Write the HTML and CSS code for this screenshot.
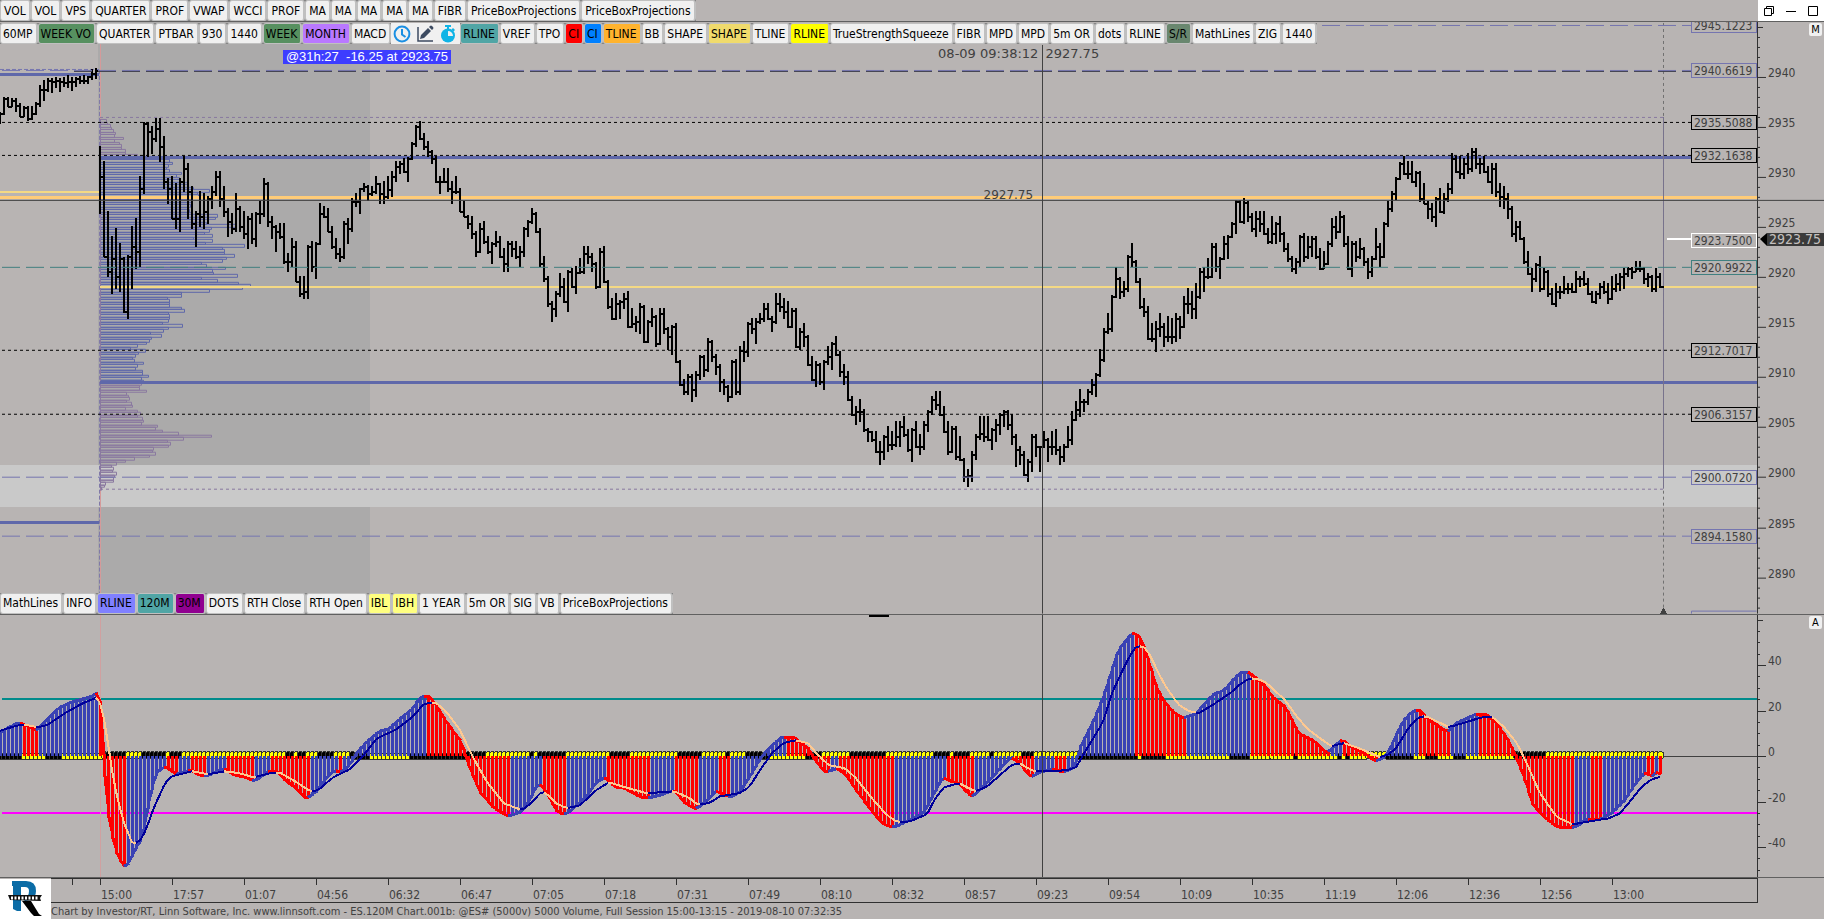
FILE: index.html
```html
<!doctype html>
<html lang="en">
<head>
  <title>ES.120M Chart</title>
  <meta charset="UTF-8">
  <meta name="viewport" content="width=device-width, initial-scale=1">
  <link rel="stylesheet" href="styles.css">
</head>
<body>
  <header class="top-bar">
    <div class="toolbar toolbar-main">
      <button type="button">VOL</button>
      <button type="button">VOL</button>
      <button type="button">VPS</button>
      <button type="button">QUARTER</button>
      <button type="button">PROF</button>
      <button type="button">VWAP</button>
      <button type="button">WCCI</button>
      <button type="button">PROF</button>
      <button type="button">MA</button>
      <button type="button">MA</button>
      <button type="button">MA</button>
      <button type="button">MA</button>
      <button type="button">MA</button>
      <button type="button">FIBR</button>
      <button type="button">PriceBoxProjections</button>
      <button type="button">PriceBoxProjections</button>
    </div>
    <div class="window-controls">
      <button type="button" aria-label="Restore">
        <svg width="10" height="10" viewBox="0 0 10 10"><path d="M2.500 2.500V.5h7v7h-2M.5 2.500h7v7h-7z"/></svg>
      </button>
      <button type="button" aria-label="Minimize">
        <svg width="10" height="10" viewBox="0 0 10 10"><path d="M0 5.500h10"/></svg>
      </button>
      <button type="button" aria-label="Maximize">
        <svg width="10" height="10" viewBox="0 0 10 10"><path d="M.5.5h9v9h-9z"/></svg>
      </button>
    </div>
  </header>

  <main class="panes">
    <section class="pane price-pane">
      <div class="plot">
        <svg class="layer" id="priceSvg" viewBox="0 22 1757 592" preserveAspectRatio="none"></svg>
        <div id="levels"></div>
        <div class="toolbar toolbar-top">
          <button type="button">60MP</button>
          <button type="button" class="green">WEEK VO</button>
          <button type="button">QUARTER</button>
          <button type="button">PTBAR</button>
          <button type="button">930</button>
          <button type="button">1440</button>
          <button type="button" class="green">WEEK</button>
          <button type="button" class="violet">MONTH</button>
          <button type="button">MACD</button>
          <button type="button" class="icon-btn" aria-label="Clock">
            <svg width="18" height="18" viewBox="0 0 18 18" fill="none" stroke="#1a8fe3" stroke-width="2"><circle cx="9" cy="9" r="7.400"/><path d="M9 4v5.500l3.500 2.500"/></svg>
          </button>
          <button type="button" class="icon-btn" aria-label="Draw">
            <svg width="18" height="18" viewBox="0 0 18 18"><path d="M2 2v14h15" fill="none" stroke="#3c4a60" stroke-width="1.500"/><path d="M4 14l1-4 7-7 3 3-7 7zM13 2l1-1q1-1 2 0l1 1q1 1 0 2l-1 1z" fill="#3c4a60"/></svg>
          </button>
          <button type="button" class="icon-btn" aria-label="Timer">
            <svg width="18" height="18" viewBox="0 0 18 18"><path d="M6 0h6v2H10v2H8V2H6zM14 3l2 2-1.500 1.500-2-2z" fill="#10b4e6"/><circle cx="9" cy="10.500" r="7" fill="#10b4e6"/><path d="M9 6v5h5a5 5 0 0 0-5-5z" fill="#f0f0f0"/></svg>
          </button>
          <button type="button" class="teal">RLINE</button>
          <button type="button">VREF</button>
          <button type="button">TPO</button>
          <button type="button" class="red">CI</button>
          <button type="button" class="blue">CI</button>
          <button type="button" class="orange">TLINE</button>
          <button type="button">BB</button>
          <button type="button">SHAPE</button>
          <button type="button" class="sand">SHAPE</button>
          <button type="button">TLINE</button>
          <button type="button" class="yellow">RLINE</button>
          <button type="button">TrueStrengthSqueeze</button>
          <button type="button">FIBR</button>
          <button type="button">MPD</button>
          <button type="button">MPD</button>
          <button type="button">5m OR</button>
          <button type="button">dots</button>
          <button type="button">RLINE</button>
          <button type="button" class="moss">S/R</button>
          <button type="button">MathLines</button>
          <button type="button">ZIG</button>
          <button type="button">1440</button>
        </div>
        <div class="trade-badge">@31h:27&nbsp; -16.25 at 2923.75</div>
        <div class="cursor-time">08-09 09:38:12</div>
        <div class="cursor-value">2927.75</div>
        <div class="cursor-price">2927.75</div>
        <div class="toolbar toolbar-bottom">
          <button type="button">MathLines</button>
          <button type="button">INFO</button>
          <button type="button" class="indigo">RLINE</button>
          <button type="button" class="teal">120M</button>
          <button type="button" class="purple">30M</button>
          <button type="button">DOTS</button>
          <button type="button">RTH Close</button>
          <button type="button">RTH Open</button>
          <button type="button" class="lemon">IBL</button>
          <button type="button" class="lemon">IBH</button>
          <button type="button">1 YEAR</button>
          <button type="button">5m OR</button>
          <button type="button">SIG</button>
          <button type="button">VB</button>
          <button type="button">PriceBoxProjections</button>
        </div>
      </div>
      <div class="axis" id="priceAxis">
        <svg class="layer" id="priceTicks" viewBox="0 22 67 592" preserveAspectRatio="none"></svg>
        <button type="button" class="scale-btn">M</button>
        <div class="last-price">2923.75</div>
      </div>
    </section>

    <section class="pane tsi-pane">
      <div class="plot">
        <svg class="layer" id="tsiSvg" viewBox="0 615 1757 262" preserveAspectRatio="none"></svg>
      </div>
      <div class="axis" id="tsiAxis">
        <svg class="layer" id="tsiTicks" viewBox="0 615 67 262" preserveAspectRatio="none"></svg>
        <button type="button" class="scale-btn">A</button>
      </div>
    </section>
  </main>

  <footer class="bottom-bar">
    <svg class="logo" width="51" height="41" viewBox="0 0 51 41">
      <path d="M0 1h51v40H0z" fill="#fff"/>
      <path d="M12 3h14q10 0 10 10 0 7-6 9l-5 1-4-4h3q5 0 5-6 0-4-4-4h-4v24h-4l-4-2V8h-1z" fill="#0b6ca6"/>
      <path d="M22 23h9l8 13 3 2h-8l-3-3z" fill="#000"/>
      <path d="M8 17h34l-2 3 1 3-31-1z" fill="#111"/>
      <path d="M11 20h28" stroke="#fff" stroke-width="3" stroke-dasharray="2 1.500"/>
    </svg>
    <div class="bottom-info">
      <div class="time-axis" id="timeAxis"></div>
      <div class="credits">Chart by Investor/RT, Linn Software, Inc. www.linnsoft.com - ES.120M Chart.001b: @ES# (5000v) 5000 Volume, Full Session 15:00-13:15 - 2019-08-10 07:32:35</div>
    </div>
  </footer>
  <script src="chart.js"></script>
</body>
</html>
```
FILE: styles.css
```css
* {
  box-sizing: border-box;
}
body {
  margin: 0;
  height: 100vh;
  display: flex;
  flex-direction: column;
  overflow: hidden;
  background: #b8b4b3;
  color: #404040;
  font-family: 'DejaVu Sans Condensed', 'Noto Sans', sans-serif;
  font-size: 12px;
  line-height: 16px;
}
button {
  font: inherit;
  margin: 0;
  padding: 0;
  border: 0;
  cursor: pointer;
}

/* toolbars */
.top-bar {
  display: flex;
  justify-content: space-between;
  height: 22px;
  border-bottom: 1px solid #606060;
}
.toolbar {
  display: flex;
  width: max-content;
  height: 21px;
  background: #808080;
}
.toolbar button {
  padding: 0 3px 0 2px;
  border: 1px solid #c0c0c0;
  border-right-width: 2px;
  border-radius: 3px;
  background: #f0f0f0;
  color: #000;
  white-space: nowrap;
}
.toolbar-main button {
  padding: 0 3px;
}
.toolbar-top {
  position: absolute;
  top: 1px;
  left: 0;
}
.toolbar-bottom {
  position: absolute;
  bottom: 0;
  left: 0;
}
.toolbar .icon-btn {
  display: flex;
  align-items: center;
  border-color: #f0f0f0;
  border-radius: 0;
  padding: 0 1px;
}
.toolbar .green { background: #579060; }
.toolbar .violet { background: #b978ff; }
.toolbar .teal { background: #50a5a5; }
.toolbar .red { background: #ff0000; }
.toolbar .blue { background: #0080ff; }
.toolbar .orange { background: #ffb32e; }
.toolbar .sand { background: #f0db6c; }
.toolbar .yellow { background: #ffff00; }
.toolbar .moss { background: #69876f; }
.toolbar .indigo { background: #8080ff; }
.toolbar .purple { background: #900090; }
.toolbar .lemon { background: #ffff80; }

.window-controls {
  display: flex;
  width: 66px;
  background: #fff;
}
.window-controls button {
  flex: 1;
  display: flex;
  align-items: center;
  justify-content: center;
  background: #fff;
}
.window-controls svg {
  fill: none;
  stroke: #000;
}

/* panes */
.panes {
  flex: 1;
  display: flex;
  flex-direction: column;
  min-height: 0;
}
.pane {
  display: grid;
  grid-template-columns: 1fr 67px;
  border-bottom: 1px solid #606060;
  min-height: 0;
}
.price-pane {
  flex: 593 0 0;
}
.tsi-pane {
  flex: 263 0 0;
}
.plot,
.axis {
  position: relative;
  overflow: hidden;
}
.layer {
  position: absolute;
  width: 100%;
  height: 100%;
  shape-rendering: crispEdges;
}
.axis-label {
  position: absolute;
  left: 11px;
  transform: translateY(-12px);
}
.scale-btn {
  position: absolute;
  top: 1px;
  right: 2px;
  width: 13px;
  height: 13px;
  line-height: 13px;
  font-size: 11px;
  background: #f0f0f0;
  color: #000;
  border-radius: 2px;
}
.last-price {
  position: absolute;
  top: 35.600%;
  left: 10px;
  right: 0;
  height: 13px;
  padding-left: 2px;
  background: #3a3a3a;
  color: #c4c0bf;
  font-size: 14px;
  line-height: 13px;
}
.last-price::before {
  content: '';
  position: absolute;
  right: 100%;
  top: 0;
  border: solid transparent;
  border-width: 6px 7px 7px 0;
  border-right-color: #000;
}

/* text on the price plot */
.level {
  position: absolute;
  right: 0;
  width: 66px;
  height: 15px;
  line-height: 14px;
  padding-left: 2px;
  border: 1px solid #000;
  transform: translateY(-7px);
}
.level.slate { border-color: #7575b0; }
.level.white { border-color: #fff; }
.level.sea { border-color: #408080; }
.trade-badge {
  position: absolute;
  top: 28px;
  left: 16.100%;
  height: 14px;
  padding: 0 3px;
  background: #3d3dff;
  color: #fff;
  font-family: 'Liberation Sans', Arial, sans-serif;
  font-size: 13px;
  line-height: 14px;
  white-space: nowrap;
}
.cursor-time,
.cursor-value,
.cursor-price {
  position: absolute;
  top: 24px;
  font-family: 'DejaVu Sans', sans-serif;
  font-size: 13px;
}
.cursor-time {
  right: 40.900%;
}
.cursor-value {
  left: 59.500%;
}
.cursor-price {
  top: 27.900%;
  right: 41.200%;
  font-size: 12px;
}

/* time axis and credits */
.bottom-bar {
  display: flex;
  height: 41px;
}
.logo {
  flex: none;
}
.bottom-info {
  flex: 1;
}
.time-axis {
  position: relative;
  height: 25px;
  margin-right: 66px;
  border: solid #303030;
  border-width: 1px 1px 1px 0;
}
.time-mark {
  position: absolute;
  top: 0;
  height: 6px;
  border-left: 1px solid #303030;
}
.time-mark span {
  position: absolute;
  top: 8px;
  left: 0;
}
.credits {
  padding-top: 1px;
  font-size: 11px;
  line-height: 15px;
  white-space: nowrap;
}
```
FILE: chart.js
```js
const priceSvg = document.getElementById('priceSvg');
const tsiSvg = document.getElementById('tsiSvg');

const SLATE = '#7575b0';
const BLUE = '#5f68aa';
const PURPLE = '#8a78a0';

// high low close, one bar every 4 units
const bars = `
113 124 114,98 115 99,98 107 107,99 107 101,99 112 106,104 117 117,107 117 108,107 121 119,107 120 114,103 115 104,
86 107 90,81 101 90,79 92 81,79 93 82,78 88 81,79 92 82,78 87 83,76 88 82,78 91 82,78 87 79,77 84 81,76 84 81,77 84 77,70 80 74,69 79 71,
147 214 177,162 257 257,212 277 272,237 294 259,229 289 277,244 292 259,258 313 312,256 319 257,227 289 247,219 269 252,
177 267 189,123 194 124,123 157 132,127 154 139,119 142 129,119 162 147,137 189 182,179 204 189,177 219 219,184 229 219,
179 232 182,157 192 169,164 219 192,187 229 224,212 247 214,192 227 217,194 229 212,197 224 199,187 209 192,172 196 177,
172 207 199,187 217 212,209 237 222,214 234 229,194 232 209,207 232 227,212 239 234,217 249 219,214 244 239,213 247 214,
202 224 214,179 217 184,183 227 222,217 239 227,226 252 232,224 239 237,224 264 262,254 272 262,239 267 247,242 282 282,
277 297 294,277 299 292,246 299 247,242 272 267,243 279 244,204 245 214,207 218 217,209 232 232,227 249 247,239 259 254,
249 262 257,222 259 224,219 244 229,199 232 202,194 207 202,189 214 189,184 192 187,186 201 194,187 196 192,177 194 184,
184 204 194,182 204 197,177 199 190,172 197 177,162 182 167,162 174 164,159 173 172,158 182 159,143 160 144,126 147 127,
122 140 139,134 150 147,142 157 152,151 164 159,157 183 182,177 194 182,169 183 182,169 192 189,182 204 192,177 194 192,
189 212 212,202 217 217,216 229 224,217 239 234,232 257 252,224 253 229,
222 244 242,237 254 252,243 264 244,232 247 242,237 258 257,249 272 264,242 272 244,242 257 249,242 259 257,247 267 252,
228 257 229,221 237 222,209 224 214,213 233 232,229 267 264,257 282 279,277 307 304,302 322 309,292 317 294,274 297 287,
279 303 302,271 312 272,269 288 287,267 294 273,259 274 272,247 274 254,247 264 257,254 272 264,263 289 287,249 288 252,
247 283 282,281 309 307,299 320 319,294 320 304,301 319 302,294 309 299,292 328 327,309 328 324,317 332 322,304 334 307,
306 343 342,321 343 322,309 327 317,316 347 344,309 345 314,309 334 329,328 350 337,326 355 327,324 363 362,361 386 385,
380 395 392,375 395 377,375 402 390,372 397 375,356 380 357,356 377 370,339 372 342,341 362 357,355 375 367,365 392 382,
380 395 387,386 402 397,361 398 362,360 395 392,347 395 351,342 362 352,323 357 324,319 334 329,319 344 322,314 324 319,
304 322 309,304 320 319,317 332 322,294 324 304,294 312 307,299 319 312,302 328 327,309 328 311,309 348 347,329 350 332,
324 347 337,336 366 365,357 381 380,362 387 365,364 385 382,361 390 362,347 365 357,343 370 344,337 356 355,352 377 372,
365 385 377,372 401 400,397 416 415,407 425 412,400 422 412,410 432 430,429 442 432,432 442 440,432 453 452,442 465 452,
436 460 437,427 452 445,432 450 445,422 447 437,422 447 427,417 437 435,430 452 450,429 462 430,422 448 447,435 455 447,
422 450 425,411 432 412,397 415 400,392 410 405,392 416 415,407 433 432,422 455 452,427 453 429,427 460 457,437 461 460,
459 482 477,470 487 476,452 482 455,435 460 437,417 440 434,417 442 437,417 441 440,429 450 430,420 442 425,414 435 415,
411 427 412,411 430 425,415 445 437,435 467 450,447 465 455,452 476 475,460 482 462,435 472 437,435 457 447,447 472 447,
432 448 440,439 462 447,432 455 447,430 455 450,447 465 457,445 462 447,427 448 440,412 445 420,402 421 410,390 417 402,
400 412 402,390 405 392,380 395 385,374 397 375,350 377 360,329 362 332,314 334 329,296 332 297,268 298 279,278 299 292,
282 297 289,256 292 257,244 267 262,261 283 282,279 309 307,299 317 312,307 340 339,324 342 339,322 352 329,314 337 327,
324 347 337,317 342 337,319 344 337,314 342 319,317 339 327,297 328 304,289 314 304,292 319 309,284 319 297,269 299 272,
268 292 277,259 279 277,244 278 247,244 272 267,258 279 259,237 260 244,236 259 237,223 238 224,201 234 202,201 223 222,
199 224 203,202 222 217,214 232 229,212 237 219,212 232 224,212 235 234,229 244 242,217 244 234,223 244 224,217 242 234,
233 252 249,244 262 259,257 272 269,259 274 262,236 267 237,234 262 257,237 259 247,237 257 239,237 259 257,249 270 269,
252 269 264,242 265 244,219 247 227,217 239 232,212 233 217,216 247 244,237 270 269,242 277 244,242 262 257,239 259 249,
248 266 262,259 279 272,257 277 259,229 260 247,244 267 257,223 258 224,202 227 209,192 212 194,178 200 179,163 180 164,
157 175 174,162 179 174,162 183 182,172 187 173,172 202 199,184 204 204,202 219 209,204 222 217,198 227 199,189 213 212,
194 214 199,184 202 189,154 194 159,157 173 172,157 179 174,159 179 164,154 174 169,149 172 152,149 169 164,159 174 164,
157 173 172,167 183 182,164 194 169,164 197 192,184 207 197,187 209 199,194 219 209,207 237 234,222 242 227,222 240 239,
238 264 262,252 275 274,269 292 279,264 282 265,257 292 289,269 290 272,271 297 294,289 305 304,284 307 292,287 299 292,
277 294 289,284 294 289,284 293 292,272 293 279,277 287 279,272 286 284,279 295 294,292 303 302,292 304 294,284 299 287,
282 294 292,284 304 299,277 300 289,275 292 284,274 291 277,269 289 274,268 277 269,268 279 272,262 272 269,262 272 269,
268 284 279,274 287 277,276 292 289,269 292 277,274 288 287`;

// volume at price, 0.25 point rows
const profile = [
  6, 7, 10, 11, 13, 15, 14, 23, 14, 19, 21, 21, 25, 25, 37, 69,
  69, 72, 68, 66, 69, 81, 76, 79, 79, 87, 83, 93, 109, 97, 98, 87, 92, 92, 90, 87, 89, 92, 117, 115,
  103, 106, 135, 111, 109, 104, 112, 93, 112, 105, 144, 122, 124, 124, 134, 126, 122, 101, 106, 125,
  112, 113, 137, 101, 117, 138, 150, 142, 109, 81, 81, 67, 69, 69, 69, 81, 84, 68, 69, 69, 68, 62, 82,
  68, 63, 50, 61, 51, 49, 46, 37, 30, 45, 38, 35, 32, 34, 43, 37, 35, 42, 42, 48, 41, 43,
  41, 39, 39, 46, 26, 28, 29, 26, 31, 32, 25, 37, 40, 37, 42, 43, 41, 57, 55, 62, 78, 111, 83, 67, 70,
  68, 53, 52, 55, 49, 34, 25, 16, 11, 13, 12, 16, 14, 13, 13, 5, 4, 1
];

// x y points of the strength line and of its signal
const strength = `0 732,18 722,27 726,36 730,47 719,58 708,71 702,92 696,98 691,100 703,104 767,107 807,112 835,117 855,124 866,126 867,
134 850,142 837,145 820,150 793,156 773,162 767,166 767,176 774,184 772,190 769,199 775,206 776,223 768,234 775,245 777,254 781,
268 771,277 771,286 781,295 787,306 799,317 790,324 780,333 770,342 772,350 763,357 752,366 742,379 731,388 729,404 715,411 710,
421 696,428 696,435 704,446 722,461 742,469 767,480 792,493 807,507 816,520 812,529 800,538 782,547 793,557 812,566 814,576 805,
585 797,596 782,605 777,615 787,625 788,638 796,647 798,656 796,674 790,685 803,695 809,703 803,716 791,730 797,739 792,745 783,
753 770,762 755,770 747,781 737,795 737,799 742,807 747,814 759,825 772,837 768,846 775,856 790,871 810,883 824,894 827,910 819,
923 813,931 798,942 777,950 781,959 783,971 797,986 783,1000 768,1010 757,1019 762,1030 777,1042 771,1053 769,1063 772,1074 767,
1080 747,1095 717,1103 697,1118 650,1133 632,1140 638,1147 657,1156 687,1164 702,1174 713,1182 718,1195 714,1206 702,1214 693,
1223 691,1239 673,1248 672,1254 677,1262 683,1274 699,1285 707,1298 733,1314 741,1326 753,1342 739,1350 747,1363 752,1374 761,
1383 758,1389 750,1402 722,1411 712,1419 709,1426 718,1447 732,1456 723,1475 714,1486 714,1495 722,1506 737,1516 757,1525 780,
1532 803,1542 815,1557 827,1575 827,1586 819,1601 819,1612 812,1624 800,1635 783,1644 773,1648 774,1652 776,1656 772,1660 774,1664 775`;

const signal = `2 730,18 725,27 725,38 727,47 725,65 713,83 703,98 697,102 708,106 730,114 783,123 820,132 842,138 843,145 832,154 807,
166 781,172 776,192 771,208 774,225 771,239 773,254 777,270 773,279 772,295 781,310 791,318 790,333 777,350 769,362 757,377 738,
395 730,411 718,424 704,435 702,446 711,460 730,473 757,487 782,504 803,522 810,531 803,541 792,545 792,556 803,567 808,580 805,
596 790,609 782,625 787,647 793,674 791,690 798,697 804,709 803,720 796,739 793,749 787,762 767,772 753,783 743,795 740,808 743,
818 755,829 765,845 768,856 778,871 797,887 815,898 822,910 821,927 814,934 800,944 787,959 783,975 791,986 787,1000 775,
1011 765,1019 763,1034 771,1047 771,1067 770,1076 767,1086 750,1103 722,1112 693,1126 663,1135 647,1143 646,1149 653,1158 672,
1166 687,1179 705,1189 711,1199 713,1214 704,1233 691,1239 685,1250 678,1262 680,1269 685,1285 700,1298 718,1309 730,1331 746,
1344 743,1359 748,1380 757,1389 754,1396 748,1409 727,1419 717,1426 716,1449 727,1463 723,1482 717,1493 717,1504 727,1517 743,
1529 768,1540 793,1557 817,1573 824,1590 821,1609 818,1620 813,1631 800,1642 786,1652 779,1662 776`;

// stretches where the squeeze is on (black dots)
const squeeze = [
  [0, 20], [47, 63], [105, 126], [142, 166], [171, 181], [286, 295], [297, 307], [318, 335], [350, 370],
  [411, 460], [464, 487], [530, 535], [538, 566], [609, 630], [679, 702], [726, 730], [746, 768],
  [806, 823], [850, 887], [934, 942], [944, 951], [955, 971], [991, 994], [1021, 1035], [1078, 1137],
  [1141, 1167], [1231, 1251], [1295, 1299], [1340, 1343], [1347, 1351], [1387, 1415], [1426, 1436],
  [1455, 1464], [1515, 1547]
];

const levels = [
  [2945.1223, 'slate'], [2940.6619, 'slate'], [2935.5088, ''], [2932.1638, ''], [2923.75, 'white'],
  [2920.9922, 'sea'], [2912.7017, ''], [2906.3157, ''], [2900.072, 'slate'], [2894.158, 'slate']
];

const times = ['15:00', '17:57', '01:07', '04:56', '06:32', '06:47', '07:05', '07:18', '07:31', '07:49', '08:10',
  '08:32', '08:57', '09:23', '09:54', '10:09', '10:35', '11:19', '12:06', '12:36', '12:56', '13:00'];

function priceY(p) {
  return Math.floor(77.2 + (2940 - p) * 10.02) + 0.5;
}
function tsiY(v) {
  return Math.floor(756.6 - v * 2.275) + 0.5;
}
function add(svg, tag, attrs) {
  const el = document.createElementNS('http://www.w3.org/2000/svg', tag);
  for (const key in attrs) el.setAttribute(key, attrs[key]);
  svg.appendChild(el);
}
function line(svg, x1, y1, x2, y2, stroke, width, dash) {
  add(svg, 'line', { x1, y1, x2, y2, stroke, 'stroke-width': width || 1, 'stroke-dasharray': dash || 'none' });
}
function path(svg, d, stroke, width) {
  add(svg, 'path', { d, stroke, 'stroke-width': width, fill: 'none' });
}
function rect(svg, x, y, width, height, fill) {
  add(svg, 'rect', { x, y, width, height, fill });
}
function parse(text) {
  return text.split(',').map(row => row.trim().split(' ').map(Number));
}

function drawPrice() {
  const s = priceSvg;
  rect(s, 98, 22, 272, 592, '#abaaaa');
  rect(s, 0, 465, 1757, 42, '#c9c9c9');

  line(s, 100.5, 22, 100.5, 614, '#d59a9a');
  line(s, 99.5, 70, 99.5, 614, '#8078a8', 1, '4 2');

  // profile rows
  profile.forEach((w, i) => {
    const y = Math.round(119 + i * 2.505);
    const next = Math.round(119 + (i + 1) * 2.505);
    const color = i > 14 && i < 105 ? BLUE : PURPLE;
    path(s, `M100 ${y + 0.5}h${w + 0.5}V${next + 0.5}H100`, color, 1);
  });
  line(s, 100.5, 119, 100.5, 489, PURPLE);

  // session lines
  line(s, 0, 74.5, 99, 74.5, BLUE, 3);
  line(s, 0, 522.5, 99, 522.5, BLUE, 3);
  line(s, 0, 69.5, 99, 69.5, SLATE, 1, '4 2');
  line(s, 100, 157.5, 1691, 157.5, BLUE, 3);
  line(s, 100, 382.5, 1757, 382.5, BLUE, 3);
  line(s, 0, 192, 100, 192, '#f4d984', 2);
  line(s, 0, 197.5, 1757, 197.5, '#ffcc78', 3);
  line(s, 100, 287, 1757, 287, '#f4d984', 2);
  line(s, 100, 117.5, 1663, 117.5, '#8878a0', 1, '3 3');
  line(s, 100, 489.5, 1663, 489.5, '#8878a0', 1, '3 3');

  line(s, 1663.5, 23, 1663.5, 614, '#707070', 1, '3 3');
  line(s, 1663.5, 117, 1663.5, 489, '#77728c');
  add(s, 'path', { d: 'M1660 614l3.500-6 3.500 6z', fill: '#404040' });

  // price bars
  let d = '';
  parse(bars).forEach(([high, low, close], i) => {
    d += `M${i * 4} ${high - 1}V${low}M${i * 4} ${close}h4`;
  });
  path(s, d, '#000', 2);

  // pivot levels
  levels.forEach(([price, kind]) => {
    const y = priceY(price);
    if (kind === 'slate') line(s, 2, y, 1691, y, SLATE, 1, '18 6');
    if (kind === 'sea') line(s, 2, y, 1691, y, '#408080', 1, '18 6');
    if (kind === '') line(s, 2, y, 1691, y, '#000', 1, '3 3');
  });
  line(s, 74, 71.500, 1691, 71.500, '#404050', 1, '18 6');
  line(s, 1667, 239, 1691, 239, '#fff', 2);
  path(s, 'M1691.5 614v-2.500h65', SLATE, 1);

  // crosshair
  line(s, 0, 200.5, 1757, 200.5, '#404040');
  line(s, 1042.5, 45, 1042.5, 614, '#404040');

  const box = document.getElementById('levels');
  levels.forEach(([price, kind]) => {
    const el = document.createElement('div');
    el.className = 'level ' + kind;
    el.textContent = price.toFixed(4);
    el.style.top = (priceY(price) - 22.5) / 592 * 100 + '%';
    box.appendChild(el);
  });
}

function valueAt(points, x) {
  for (let i = 1; i < points.length; i++) {
    const [x0, y0] = points[i - 1];
    const [x1, y1] = points[i];
    if (x <= x1) return y0 + (y1 - y0) * (x - x0) / (x1 - x0);
  }
  return points[points.length - 1][1];
}

function drawTsi() {
  const s = tsiSvg;
  const points = parse(strength);
  line(s, 2, 699, 1757, 699, '#008b8b', 2);
  line(s, 2, 813, 1757, 813, '#ff00ff', 2);
  line(s, 0, 756.5, 1757, 756.5, '#404040');
  line(s, 100.5, 615, 100.5, 877, '#d0a0a0');
  rect(s, 869, 615, 20, 2, '#000');

  for (let x = 0; x <= 1662; x += 4) {
    const on = squeeze.some(([from, to]) => x >= from && x <= to);
    const y = valueAt(points, x) < 756 ? 756 : 755;
    add(s, 'circle', { cx: x + 0.5, cy: y, r: 3.5, fill: on ? '#000' : '#ff0', stroke: '#333', 'stroke-width': 1 });
  }
  for (let x = 0; x <= 1662; x += 4) {
    const y = valueAt(points, x);
    const prev = valueAt(points, x - 4);
    const color = x === 0 || y < prev ? '#3a42b4' : '#ff0000';
    line(s, x + 0.5, 756, x + 0.5, y, color, 3);
    if (x > 0) line(s, x - 4, prev, x + 1, y, color, 3);
  }
  const sig = parse(signal);
  for (let x = 4; x <= 1662; x += 4) {
    const y = valueAt(sig, x);
    const prev = valueAt(sig, x - 4);
    line(s, x - 4, prev, x, y, y <= prev ? '#00009a' : '#ffc890', 2);
  }
  line(s, 1042.5, 615, 1042.5, 877, '#404040');
}

function axisLabel(axis, text, top) {
  const el = document.createElement('span');
  el.className = 'axis-label';
  el.textContent = text;
  el.style.top = top + '%';
  axis.appendChild(el);
}

function drawAxes() {
  const pt = document.getElementById('priceTicks');
  const tt = document.getElementById('tsiTicks');
  line(pt, 0.5, 22, 0.5, 614, '#303030');
  line(tt, 0.5, 615, 0.5, 877, '#303030');
  line(pt, 0, 200.5, 67, 200.5, '#404040');

  for (let p = 2887; p <= 2945; p++) {
    const major = p % 5 === 0;
    line(pt, 1, priceY(p), p === 2945 ? 6 : major ? 9 : 3, priceY(p), '#303030');
    if (major && p < 2945) axisLabel(document.getElementById('priceAxis'), p, (priceY(p) - 22) / 592 * 100);
  }
  for (let v = -50; v <= 60; v += 5) {
    const major = v % 20 === 0;
    line(tt, 1, tsiY(v), v === 60 ? 6 : major ? 9 : 3, tsiY(v), '#303030');
    if (major && v < 60) axisLabel(document.getElementById('tsiAxis'), v, (tsiY(v) - 615) / 262 * 100);
  }

  const timeAxis = document.getElementById('timeAxis');
  ['', ...times].forEach((time, i) => {
    const x = i === 0 ? 72 : 28 + i * 72;
    const mark = document.createElement('div');
    mark.className = 'time-mark';
    mark.style.left = (x - 51) / 1706 * 100 + '%';
    const label = document.createElement('span');
    label.textContent = time;
    mark.appendChild(label);
    timeAxis.appendChild(mark);
  });
}

drawPrice();
drawTsi();
drawAxes();
```
